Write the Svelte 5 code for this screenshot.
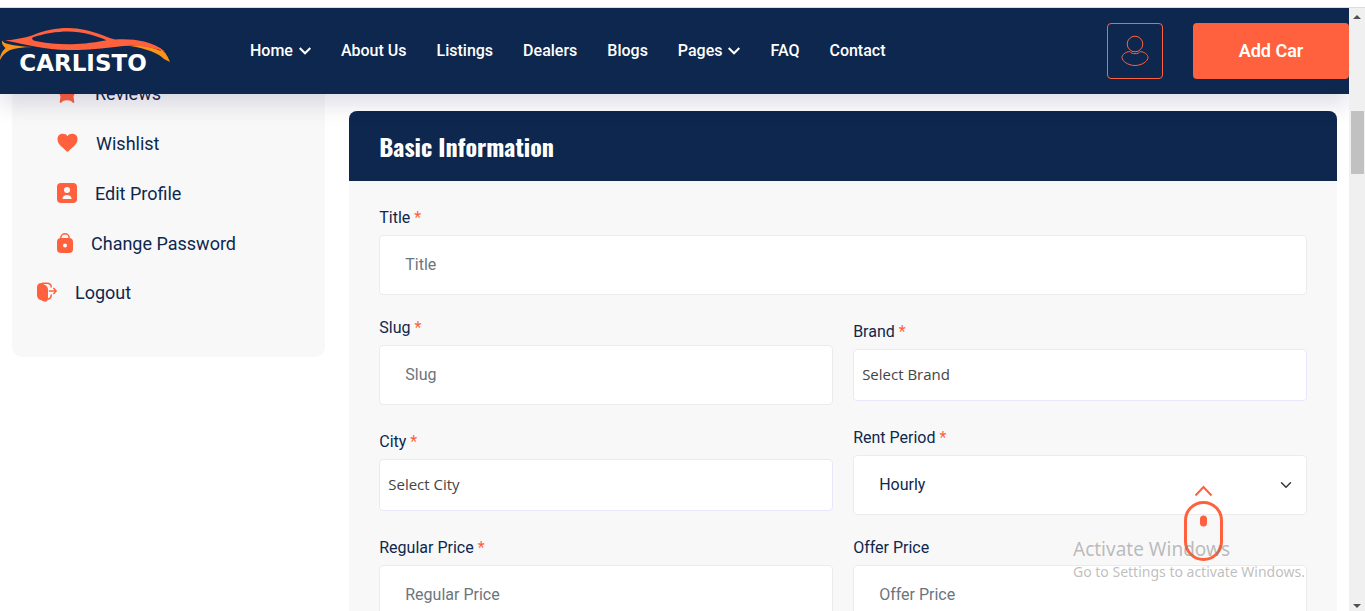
<script>
  const nav = [
    { label: 'Home', menu: true },
    { label: 'About Us' },
    { label: 'Listings' },
    { label: 'Dealers' },
    { label: 'Blogs' },
    { label: 'Pages', menu: true },
    { label: 'FAQ' },
    { label: 'Contact' }
  ];

  const account = [
    { label: 'Reviews', icon: 'badge' },
    { label: 'Wishlist', icon: 'heart' },
    { label: 'Edit Profile', icon: 'profile' },
    { label: 'Change Password', icon: 'lock' }
  ];

  const fields = [
    { id: 'title', label: 'Title', required: true, kind: 'text', wide: true },
    { id: 'slug', label: 'Slug', required: true, kind: 'text' },
    { id: 'brand', label: 'Brand', required: true, kind: 'picker', value: 'Select Brand' },
    { id: 'city', label: 'City', required: true, kind: 'picker', value: 'Select City' },
    { id: 'period', label: 'Rent Period', required: true, kind: 'select', value: 'Hourly' },
    { id: 'regular', label: 'Regular Price', required: true, kind: 'text' },
    { id: 'offer', label: 'Offer Price', required: false, kind: 'text' }
  ];
</script>

{#snippet icon(name)}
  {#if name === 'badge'}
    <svg width="20" height="20" viewBox="0 0 20 20" aria-hidden="true">
      <circle cx="10" cy="7" r="7" />
      <path d="M2 10h16l-1.500 3.500.8 5.500q-.3 1.200-1.500.8L14 18q-4-1.500-8 0l-1.800 1.800q-1.200.4-1.500-.8l.8-5.500z" />
    </svg>
  {:else if name === 'heart'}
    <svg width="21" height="20" viewBox="0 0 21 20" aria-hidden="true">
      <path d="M10.500 3.200C8.500-.3.500-.3.500 6.200c0 5.300 6 8.600 8.700 11.800q1.300 1.500 2.600 0c2.700-3.200 8.700-6.500 8.700-11.800 0-6.500-8-6.500-10-3z" />
    </svg>
  {:else if name === 'profile'}
    <svg width="20" height="20" viewBox="0 0 20 20" aria-hidden="true">
      <rect width="20" height="20" rx="4" />
      <g class="cut">
        <circle cx="10" cy="7" r="3" />
        <path d="M5.500 16v-.5c0-2.300 2-3.500 4.500-3.500s4.500 1.200 4.500 3.500v.5z" />
      </g>
    </svg>
  {:else if name === 'lock'}
    <svg width="16" height="20" viewBox="0 0 16 20" aria-hidden="true">
      <path class="line" d="M3.800 6.500V5a4.200 4.200 0 0 1 8.400 0v1.500" />
      <rect y="5" width="16" height="15" rx="4" />
      <circle class="cut" cx="8" cy="12.500" r="2" />
    </svg>
  {:else}
    <svg width="20" height="20" viewBox="0 0 20 20" aria-hidden="true">
      <path d="M4.500 1C1.500 1 0 2.500 0 5.500V13c0 2.500 1 4 3.500 5l3 1.300c2.500 1 4.500-.3 4.500-2.800V8c0-2.500-1-4-3-5z" />
      <path class="line" d="M5 1.200h5c3 0 4.300 1.300 4.300 4.300M14.300 12.500c0 3-1 4.300-3.500 4.800M11.800 9h7M16.300 6l3 3-3 3" />
    </svg>
  {/if}
{/snippet}

<div class="window">
  <div class="edge"></div>
  <div class="frame">
    <div class="page">
      <header>
        <a class="logo" href="#home" aria-label="Carlisto">
          <svg width="172" height="62" viewBox="0 20 172 62">
            <path class="amber" d="M2 40.500q2 3 6 3.500 11 2.500 25 3Q17 47 9 50.500 3 54 0 60q-.5-6 5.500-12-4-3-3.500-7.500z" />
            <path class="amber" d="M130 46q18-1 31 5l-3-4q8 4 12 15l-6-3q-9-9-34-13z" />
            <path
              class="coral"
              fill-rule="evenodd"
              d="M5 40.500Q20 39 32 35.500C45 30 56 28 68 28s23 3 34 7q7 3 13 4.500c18-1 36 1 50 12-17-6-34-7-50-4.500-20 2.500-33 3-47 3C45 50 27 44.500 5 40.500zM32.500 37.500c-1 1.800.5 3 3 3.500 11 2.300 22 3.200 32.500 3.200s23-1 38.500-4C94 35 83 31.500 68 31.500c-11 0-24 2-35.500 6z"
            />
            <text x="83" y="71" text-anchor="middle">CARLISTO</text>
          </svg>
        </a>
        <nav>
          {#each nav as item}
            <a href="#{item.label}">
              {item.label}
              {#if item.menu}
                <svg width="12" height="8" viewBox="0 0 12 8" aria-hidden="true"><path d="M.7 1L6 6.300 11.300 1" /></svg>
              {/if}
            </a>
          {/each}
        </nav>
        <button class="user" type="button" aria-label="Account">
          <svg width="28" height="32" viewBox="0 0 28 32" aria-hidden="true">
            <circle cx="14" cy="9" r="7.800" />
            <path d="M8.800 16.500C4.500 17 1 19.500 1 22.500c0 3.500 6 8 13 8s13-4.500 13-8c0-3-3.500-5.500-7.800-6-1 1.500-3 2.200-5.200 2.200s-4.200-.7-5.200-2.200z" />
          </svg>
        </button>
        <button class="add" type="button">Add Car</button>
      </header>

      <main>
        <aside>
          {#each account as item}
            <a class="sub" href="#{item.icon}">{@render icon(item.icon)}{item.label}</a>
          {/each}
          <a class="exit" href="#logout">{@render icon('logout')}Logout</a>
        </aside>

        <form>
          <h2>Basic Information</h2>
          <div class="fields">
            {#each fields as f}
              <div class="field" class:wide={f.wide}>
                <label for={f.id}>{f.label}{#if f.required}<span>&nbsp;*</span>{/if}</label>
                {#if f.kind === 'text'}
                  <input id={f.id} type="text" placeholder={f.label} />
                {:else}
                  <select id={f.id} class={f.kind}><option>{f.value}</option></select>
                {/if}
              </div>
            {/each}
          </div>
        </form>
      </main>

      <button class="totop" type="button" aria-label="Back to top">
        <svg width="40" height="76" viewBox="0 0 40 76" aria-hidden="true">
          <path d="M12.500 10.500l8-8.500 8 8.500" stroke-width="2" />
          <rect x="2.500" y="17.500" width="36" height="57" rx="18" stroke-width="3" />
          <rect class="wheel" x="17" y="30.500" width="7" height="11" rx="3.500" />
        </svg>
      </button>

      <div class="notice">
        <strong>Activate Windows</strong>
        <span>Go to Settings to activate Windows.</span>
      </div>
    </div>

    <div class="scrollbar" aria-hidden="true">
      <svg width="8" height="4" viewBox="0 0 8 4"><path d="M0 4l4-4 4 4z" /></svg>
      <div class="track"><div class="thumb"></div></div>
      <svg width="8" height="4" viewBox="0 0 8 4"><path d="M0 0l4 4 4-4z" /></svg>
    </div>
  </div>
</div>

<style>
  :global(body) {
    margin: 0;
    overflow: hidden;
  }
  .window {
    --navy: #0e274e;
    --coral: #ff613e;
    display: flex;
    flex-direction: column;
    height: 100vh;
    background: #fff;
    color: var(--navy);
    font: 16px/24px Roboto, sans-serif;
  }
  .window * {
    box-sizing: border-box;
  }
  a {
    color: inherit;
    text-decoration: none;
  }
  button,
  input,
  select {
    font: inherit;
    margin: 0;
  }
  button {
    cursor: pointer;
    padding: 0;
  }
  .edge {
    flex: none;
    height: 8px;
    border-bottom: 1px solid #dcdde3;
  }
  .frame {
    flex: 1;
    min-height: 0;
    display: flex;
  }
  .page {
    flex: 1;
    min-width: 0;
    position: relative;
    overflow: hidden;
  }

  header {
    position: relative;
    z-index: 2;
    display: flex;
    align-items: center;
    height: 86px;
    background: var(--navy);
    box-shadow: 0 12px 20px rgba(26, 8, 70, 0.12);
  }
  .logo {
    display: flex;
    width: 172px;
    margin-right: 78px;
  }
  .logo text {
    font: bold 23px 'DejaVu Sans', sans-serif;
    fill: #fff;
  }
  .amber {
    fill: #fb9316;
  }
  .coral {
    fill: var(--coral);
  }
  nav {
    display: flex;
    gap: 30px;
    margin-right: auto;
    color: #fff;
    font-weight: 500;
  }
  nav a {
    display: flex;
    align-items: center;
    gap: 6px;
  }
  nav svg {
    fill: none;
    stroke: #fff;
    stroke-width: 2;
  }
  .user {
    display: flex;
    align-items: center;
    justify-content: center;
    width: 56px;
    height: 56px;
    margin-right: 30px;
    border: 1px solid var(--coral);
    border-radius: 4px;
    background: none;
  }
  .user svg {
    fill: none;
    stroke: var(--coral);
  }
  .add {
    width: 156px;
    height: 56px;
    border: 0;
    border-radius: 4px;
    background: var(--coral);
    color: #fff;
    font-size: 18px;
    font-weight: 600;
  }

  main {
    display: grid;
    grid-template-columns: minmax(0, 1fr) minmax(0, 3fr);
    align-items: start;
    margin-top: -26px;
  }
  aside {
    margin: 0 12px;
    padding: 1px 25px 40px;
    border-radius: 0 0 10px 10px;
    background: #f8f8f8;
    font-size: 18px;
  }
  aside a {
    display: flex;
    align-items: center;
    gap: 18px;
    height: 50px;
  }
  aside .exit {
    height: 48px;
  }
  aside .sub {
    padding-left: 20px;
  }
  aside svg {
    margin-bottom: 2px;
    fill: var(--coral);
  }
  .cut {
    fill: #f8f8f8;
  }
  .line {
    fill: none;
    stroke: var(--coral);
    stroke-width: 1.5;
  }

  form {
    margin: 43px 12px 0;
    border-radius: 8px;
    overflow: hidden;
    background: #f8f8f8;
  }
  h2 {
    margin: 0;
    padding: 20px 30px;
    background: var(--navy);
    color: #fff;
    font: bold 24px/30px Oswald, 'Liberation Sans Narrow', sans-serif;
  }
  .fields {
    display: grid;
    grid-template-columns: 1fr 1fr;
    align-items: center;
    gap: 20px;
    padding: 24px 30px 30px;
  }
  .field {
    display: flex;
    flex-direction: column;
    gap: 4px;
  }
  .wide {
    grid-column: 1 / -1;
  }
  label {
    line-height: 26px;
  }
  label span {
    color: var(--coral);
  }
  input,
  select {
    width: 100%;
    height: 60px;
    padding: 0 25px;
    border: 1px solid #ebebeb;
    border-radius: 4px;
    background-color: #fff;
    color: var(--navy);
    appearance: none;
  }
  input {
    padding-bottom: 2px;
  }
  input::placeholder {
    color: #6c757d;
    opacity: 1;
  }
  .select {
    background-image: url("data:image/svg+xml,%3Csvg xmlns='http://www.w3.org/2000/svg' viewBox='0 0 16 16'%3E%3Cpath fill='none' stroke='%23343a40' stroke-linecap='round' stroke-linejoin='round' stroke-width='2' d='m2 5 6 6 6-6'/%3E%3C/svg%3E");
    background-repeat: no-repeat;
    background-position: right 14px center;
    background-size: 12px;
  }
  .picker {
    height: 52px;
    padding: 0 8px 2px;
    border-color: #e8e8fd;
    color: #444;
    font-family: 'Segoe UI', 'Open Sans', sans-serif;
    font-size: 15px;
  }

  .totop {
    position: absolute;
    right: 126px;
    bottom: 50px;
    display: flex;
    border: 0;
    background: none;
  }
  .totop svg {
    fill: none;
    stroke: var(--coral);
  }
  .totop .wheel {
    fill: var(--coral);
    stroke: none;
  }
  .notice {
    position: absolute;
    right: 40px;
    bottom: 29px;
    display: flex;
    flex-direction: column;
    width: 236px;
    color: rgba(125, 125, 125, 0.5);
    font: 14px/20px 'Segoe UI', 'Noto Sans', sans-serif;
    white-space: nowrap;
    pointer-events: none;
  }
  .notice strong {
    font-size: 19px;
    font-weight: 400;
    line-height: 26px;
  }

  .scrollbar {
    flex: none;
    display: flex;
    flex-direction: column;
    align-items: center;
    width: 16px;
    padding: 7px 0 3px;
    background: #f0f0f0;
    fill: #505050;
  }
  .track {
    flex: 1;
    align-self: stretch;
    padding: 92px 1px 0 2px;
  }
  .thumb {
    height: 63px;
    background: #c1c1c1;
  }
</style>
